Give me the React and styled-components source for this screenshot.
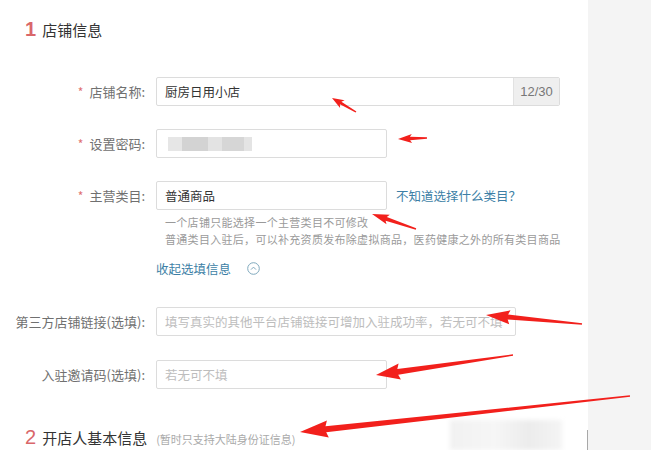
import React from 'react';
import styled, { createGlobalStyle } from 'styled-components';

const GlobalStyle = createGlobalStyle`
  html, body {
    margin: 0;
    padding: 0;
    background: #fff;
  }
  body {
    font-family: "Noto Sans CJK SC", "Noto Sans", sans-serif;
    color: #666;
  }
`;

const Page = styled.div`
  position: relative;
  display: flex;
  width: 651px;
  height: 450px;
  overflow: hidden;
`;

const Main = styled.div`
  width: 588px;
  padding-top: 19px;
  background: #fff;
`;

const Side = styled.div`
  flex: 1;
  background: #f4f4f4;
`;

const SectionTitle = styled.div`
  display: flex;
  align-items: baseline;
  height: 20px;
  line-height: 20px;
  padding-left: 25px;
  margin-top: ${(p) => p.$top || 0}px;
`;

const StepNum = styled.span`
  font-family: "Liberation Sans", Arial, sans-serif;
  font-size: 20px;
  font-weight: ${(p) => (p.$bold ? 700 : 400)};
  color: #d9676a;
  margin-right: 6px;
`;

const TitleText = styled.span`
  font-size: 15px;
  color: #333;
`;

const TitleNote = styled.span`
  font-size: 11px;
  color: #aaa;
  margin-left: 9px;
`;

const Form = styled.div`
  margin-top: 38px;
  display: flex;
  flex-direction: column;
`;

const Row = styled.div`
  display: flex;
  align-items: center;
  margin-top: ${(p) => p.$top || 0}px;
`;

const Label = styled.label`
  width: 145px;
  flex-shrink: 0;
  text-align: right;
  font-size: 13px;
  color: #707070;
  white-space: nowrap;
  margin-right: 11px;
`;

const Star = styled.span`
  color: #e07070;
  margin-right: 6px;
  font-size: 12px;
`;

const Field = styled.div`
  display: flex;
  width: ${(p) => p.$w}px;
  height: 29px;
  box-sizing: border-box;
  border: 1px solid #dcdcdc;
  border-radius: 2px;
  background: #fff;
  overflow: hidden;
`;

const Input = styled.input`
  flex: 1;
  min-width: 0;
  border: none;
  outline: none;
  padding: 0 0 0 8px;
  font-family: inherit;
  font-size: 12.5px;
  color: #333;
  background: transparent;

  &::placeholder {
    color: #bdbdbd;
  }
`;

const Counter = styled.span`
  width: 45px;
  display: flex;
  align-items: center;
  justify-content: center;
  background: #efefef;
  border-left: 1px solid #e2e2e2;
  font-family: "Liberation Sans", Arial, sans-serif;
  font-size: 13px;
  color: #777;
`;

const PasswordBlur = styled.div`
  display: flex;
  align-items: center;
  padding-left: 11px;
`;

const BlurChunk = styled.span`
  width: ${(p) => p.$w}px;
  height: 14px;
  background: ${(p) => p.$c};
  filter: blur(0.6px);
`;

const HelpLink = styled.a`
  margin-left: 9px;
  font-size: 12.5px;
  color: #3d7fa6;
  text-decoration: none;
  white-space: nowrap;
`;

const Help = styled.div`
  margin: 4px 0 0 165px;
  font-size: 11px;
  line-height: 17px;
  color: #9a9a9a;
  letter-spacing: 0.3px;
  white-space: nowrap;
`;

const Toggle = styled.div`
  display: flex;
  align-items: center;
  margin: 10px 0 0 156px;
  height: 20px;
  font-size: 12.5px;
  color: #3d7fa6;
  gap: 16px;
`;

const Mask = styled.div`
  position: absolute;
  left: 450px;
  top: 420px;
  width: 112px;
  height: 30px;
  background: linear-gradient(90deg, #f1f1f1, #f6f6f6 40%, #ececec 70%, #f4f4f4);
  filter: blur(2px);
`;

const EdgeLine = styled.div`
  position: absolute;
  left: 587px;
  top: 430px;
  width: 1px;
  height: 20px;
  background: #a8a8a8;
`;

const Arrows = styled.svg`
  position: absolute;
  left: 0;
  top: 0;
  pointer-events: none;
`;

function arrowPoints([tx, ty], [hx, hy], headLen, headW, tailW, neckW) {
  const dx = hx - tx;
  const dy = hy - ty;
  const len = Math.hypot(dx, dy);
  const ux = dx / len;
  const uy = dy / len;
  const nx = -uy;
  const ny = ux;
  const bx = hx - ux * headLen;
  const by = hy - uy * headLen;
  const pts = [
    [tx + (nx * tailW) / 2, ty + (ny * tailW) / 2],
    [bx + (nx * neckW) / 2, by + (ny * neckW) / 2],
    [bx - ux * 2 + (nx * headW) / 2, by - uy * 2 + (ny * headW) / 2],
    [hx, hy],
    [bx - ux * 2 - (nx * headW) / 2, by - uy * 2 - (ny * headW) / 2],
    [bx - (nx * neckW) / 2, by - (ny * neckW) / 2],
    [tx - (nx * tailW) / 2, ty - (ny * tailW) / 2],
  ];
  return pts.map((p) => p.map((v) => v.toFixed(1)).join(',')).join(' ');
}

// red annotation arrows drawn over the form
const arrows = [
  { tail: [356, 112], head: [332, 98], hl: 10, hw: 9, tw: 1.5, nw: 3 },
  { tail: [427, 138], head: [398, 139], hl: 12, hw: 9, tw: 1.5, nw: 3.5 },
  { tail: [416, 229], head: [372, 214], hl: 15, hw: 10, tw: 1.5, nw: 4 },
  { tail: [582, 324], head: [486, 315], hl: 22, hw: 14, tw: 1.5, nw: 5 },
  { tail: [513, 355], head: [376, 375], hl: 22, hw: 16, tw: 1.5, nw: 6 },
  { tail: [630, 396], head: [300, 432], hl: 26, hw: 17, tw: 1.5, nw: 6 },
];

const ChevronCircle = () => (
  <svg width="13" height="13" viewBox="0 0 13 13">
    <circle cx="6.5" cy="6.5" r="5.8" fill="none" stroke="#7fa9bd" strokeWidth="1" />
    <path d="M4 7.6 L6.5 5.1 L9 7.6" fill="none" stroke="#7fa9bd" strokeWidth="1" />
  </svg>
);

export default function App() {
  return (
    <>
      <GlobalStyle />
      <Page>
        <Main>
          <SectionTitle>
            <StepNum $bold>1</StepNum>
            <TitleText>店铺信息</TitleText>
          </SectionTitle>

          <Form>
            <Row>
              <Label><Star>*</Star>店铺名称:</Label>
              <Field $w={404}>
                <Input defaultValue="厨房日用小店" />
                <Counter>12/30</Counter>
              </Field>
            </Row>

            <Row $top={23}>
              <Label><Star>*</Star>设置密码:</Label>
              <Field $w={231}>
                <PasswordBlur>
                  <BlurChunk $w={14} $c="#e6e6e6" />
                  <BlurChunk $w={26} $c="#d3d3d3" />
                  <BlurChunk $w={14} $c="#e3e3e3" />
                  <BlurChunk $w={22} $c="#d6d6d6" />
                  <BlurChunk $w={8} $c="#e4e4e4" />
                </PasswordBlur>
              </Field>
            </Row>

            <Row $top={23}>
              <Label><Star>*</Star>主营类目:</Label>
              <Field $w={231}>
                <Input defaultValue="普通商品" />
              </Field>
              <HelpLink href="#">不知道选择什么类目？</HelpLink>
            </Row>

            <Help>
              一个店铺只能选择一个主营类目不可修改
              <br />
              普通类目入驻后，可以补充资质发布除虚拟商品，医药健康之外的所有类目商品
            </Help>

            <Toggle>
              收起选填信息
              <ChevronCircle />
            </Toggle>

            <Row $top={29}>
              <Label>第三方店铺链接(选填):</Label>
              <Field $w={360}>
                <Input placeholder="填写真实的其他平台店铺链接可增加入驻成功率，若无可不填" />
              </Field>
            </Row>

            <Row $top={24}>
              <Label>入驻邀请码(选填):</Label>
              <Field $w={231}>
                <Input placeholder="若无可不填" />
              </Field>
            </Row>
          </Form>

          <SectionTitle $top={38}>
            <StepNum>2</StepNum>
            <TitleText>开店人基本信息</TitleText>
            <TitleNote>(暂时只支持大陆身份证信息)</TitleNote>
          </SectionTitle>
        </Main>
        <Side />

        <Mask />
        <EdgeLine />

        <Arrows width="651" height="450" viewBox="0 0 651 450">
          {arrows.map((a, i) => (
            <polygon
              key={i}
              points={arrowPoints(a.tail, a.head, a.hl, a.hw, a.tw, a.nw)}
              fill="#f2201c"
            />
          ))}
        </Arrows>
      </Page>
    </>
  );
}
